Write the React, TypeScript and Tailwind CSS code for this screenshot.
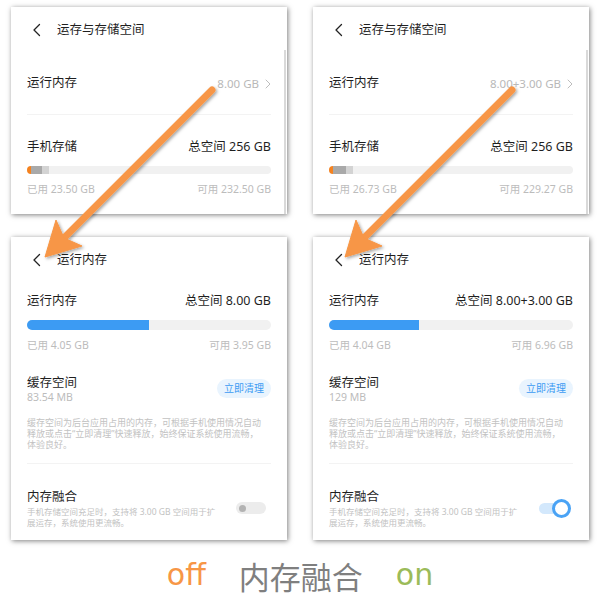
import React from 'react'

function Back() {
  return (
    <svg width="9" height="14" viewBox="0 0 9 14" className="shrink-0">
      <path d="M7.5 1.5 L2 7 L7.5 12.5" fill="none" stroke="#222" strokeWidth="1.3" strokeLinecap="round" strokeLinejoin="round" />
    </svg>
  )
}

function Right() {
  return (
    <svg width="6" height="10" viewBox="0 0 6 10" className="ml-[6px]">
      <path d="M1 1 L5 5 L1 9" fill="none" stroke="#bdbdbd" strokeWidth="1" strokeLinecap="round" strokeLinejoin="round" />
    </svg>
  )
}

function Header({ title }: { title: string }) {
  return (
    <div className="h-[46px] flex items-center pl-[21px]">
      <Back />
      <span className="ml-[16px] text-[12.5px] text-[#1f1f1f]">{title}</span>
    </div>
  )
}

function StoragePanel({ ram, used, free, grey }: { ram: string; used: string; free: string; grey: number }) {
  return (
    <div className="relative bg-white h-[207px] shadow-[1px_1px_5px_rgba(0,0,0,0.5)]">
      <Header title="运存与存储空间" />
      <div className="px-4">
        <div className="h-[62px] flex items-center justify-between border-b border-[#f3f3f3]">
          <span className="text-[12.5px] text-[#1f1f1f]">运行内存</span>
          <span className="flex items-center text-[11.5px] text-[#b8b8b8]">
            {ram}
            <Right />
          </span>
        </div>
        <div className="mt-[23px] h-[18px] flex items-center justify-between text-[12.5px] text-[#1f1f1f]">
          <span>手机存储</span>
          <span>总空间 256 GB</span>
        </div>
        <div className="mt-[10px] h-[8px] rounded-full bg-[#f1f1f1] flex overflow-hidden">
          <div className="w-[4px] bg-[#f5821f]" />
          <div className={grey > 11 ? 'w-[13px] bg-[#a9a9a9]' : 'w-[11px] bg-[#a9a9a9]'} />
          <div className="w-[7px] bg-[#d3d3d3]" />
        </div>
        <div className="mt-[9px] h-[14px] flex items-center justify-between text-[10.5px] text-[#bcbcbc]">
          <span>{used}</span>
          <span>{free}</span>
        </div>
      </div>
      <div className="absolute right-[1px] top-[43px] bottom-0 w-[2px] bg-[#d9d9d9]" />
    </div>
  )
}

function ToggleOff() {
  return (
    <div className="w-[30px] h-[12px] rounded-full bg-[#ececec] flex items-center pl-[3px] mr-[5px]">
      <div className="w-[7px] h-[7px] rounded-full bg-[#b3b3b3]" />
    </div>
  )
}

function ToggleOn() {
  return (
    <div className="relative w-[32px] h-[19px] mr-[2px]">
      <div className="absolute left-0 top-[4px] w-[24px] h-[11px] rounded-full bg-[#d3e8fc]" />
      <div className="absolute right-0 top-0 w-[19px] h-[19px] rounded-full border-[3px] border-[#4aa3f5] bg-white" />
    </div>
  )
}

function RamPanel({ total, used, free, pct, cache, on }: { total: string; used: string; free: string; pct: number; cache: string; on: boolean }) {
  return (
    <div className="bg-white h-[303px] shadow-[1px_1px_5px_rgba(0,0,0,0.5)]">
      <Header title="运行内存" />
      <div className="px-4">
        <div className="mt-[9px] h-[18px] flex items-center justify-between text-[12.5px] text-[#1f1f1f]">
          <span>运行内存</span>
          <span>总空间 {total}</span>
        </div>
        <div className="mt-[10px] h-[10px] rounded-full bg-[#f1f1f1] overflow-hidden">
          <div className="h-full bg-[#3c9bf3]" style={{ width: `${pct}%` }} />
        </div>
        <div className="mt-[9px] h-[14px] flex items-center justify-between text-[10.5px] text-[#bcbcbc]">
          <span>{used}</span>
          <span>{free}</span>
        </div>
        <div className="mt-[21px] flex justify-between">
          <div>
            <div className="h-[18px] flex items-center text-[12.5px] text-[#1f1f1f]">缓存空间</div>
            <div className="h-[12px] flex items-center text-[10.5px] text-[#bcbcbc]">{cache}</div>
          </div>
          <div className="mt-[5px] h-[19px] w-[54px] rounded-full bg-[#e9f4fe] flex items-center justify-center text-[10px] text-[#3c9bf3]">
            立即清理
          </div>
        </div>
        <div className="mt-[13px] text-[9px] leading-[11px] text-[#c2c2c2] whitespace-nowrap">
          缓存空间为后台应用占用的内存，可根据手机使用情况自动
          <br />
          释放或点击“立即清理”快速释放，始终保证系统使用流畅，
          <br />
          体验良好。
        </div>
        <div className="mt-[13px] border-t border-[#f3f3f3]" />
        <div className="mt-[24px] flex items-center justify-between">
          <div>
            <div className="h-[18px] flex items-center text-[12.5px] text-[#1f1f1f]">内存融合</div>
            <div className="text-[8.5px] leading-[11px] text-[#c2c2c2] whitespace-nowrap">
              手机存储空间充足时，支持将 3.00 GB 空间用于扩
              <br />
              展运存，系统使用更流畅。
            </div>
          </div>
          {on ? <ToggleOn /> : <ToggleOff />}
        </div>
      </div>
    </div>
  )
}

function Arrows() {
  return (
    <svg className="absolute inset-0 pointer-events-none" width="600" height="600" viewBox="0 0 600 600">
      <defs>
        <filter id="sh" x="-20%" y="-20%" width="140%" height="140%">
          <feDropShadow dx="1.5" dy="1.5" stdDeviation="1.5" floodColor="#000" floodOpacity="0.35" />
        </filter>
      </defs>
      <g filter="url(#sh)" fill="#f79646" stroke="#f79646">
        <line x1="212" y1="90" x2="64" y2="238" strokeWidth="7" strokeLinecap="round" />
        <polygon points="45,257 56,220 64,238 82,246" strokeWidth="1" strokeLinejoin="round" />
        <line x1="512" y1="90" x2="364" y2="238" strokeWidth="7" strokeLinecap="round" />
        <polygon points="345,257 356,220 364,238 382,246" strokeWidth="1" strokeLinejoin="round" />
      </g>
    </svg>
  )
}

export default function App() {
  return (
    <div className="relative w-[600px] h-[600px] bg-white overflow-hidden font-['Noto_Sans','Noto_Sans_CJK_SC',sans-serif]">
      <div className="pt-[7px] pl-[11px] grid grid-cols-[276px_276px] grid-rows-[207px_303px] gap-x-[26px] gap-y-[23px]">
        <StoragePanel ram="8.00 GB" used="已用 23.50 GB" free="可用 232.50 GB" grey={11} />
        <StoragePanel ram="8.00+3.00 GB" used="已用 26.73 GB" free="可用 229.27 GB" grey={13} />
        <RamPanel total="8.00 GB" used="已用 4.05 GB" free="可用 3.95 GB" pct={50} cache="83.54 MB" on={false} />
        <RamPanel total="8.00+3.00 GB" used="已用 4.04 GB" free="可用 6.96 GB" pct={36.7} cache="129 MB" on={true} />
      </div>
      <div className="mt-[15px] h-[40px] flex items-center justify-center gap-[33px] leading-none">
        <span className="text-[30px] text-[#f79646] font-['DejaVu_Sans',sans-serif]">off</span>
        <span className="text-[31px] text-[#7f7f7f] font-['Noto_Sans_CJK_SC',sans-serif]">内存融合</span>
        <span className="text-[30px] text-[#9bbb59] font-['DejaVu_Sans',sans-serif]">on</span>
      </div>
      <Arrows />
    </div>
  )
}
